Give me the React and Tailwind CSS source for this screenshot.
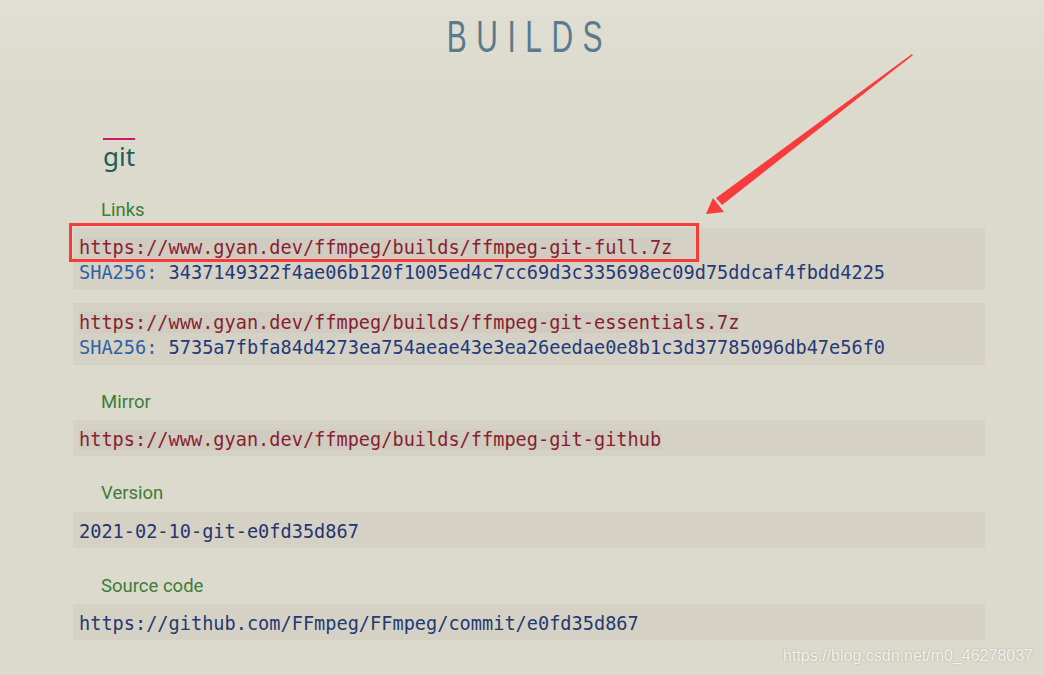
const mono = { fontFamily: '"DejaVu Sans Mono", "Liberation Mono", monospace' };

function Label({ children }) {
  return (
    <div className="h-[24px] pl-[28px] text-[18.5px] leading-[24px] text-[#3d7d37] font-['Roboto',sans-serif]">
      {children}
    </div>
  );
}

function Block({ children, single }) {
  return (
    <div
      className={
        "bg-[#d5d1c5] px-[6px] pt-[7px] text-[18.6px] leading-[25px] whitespace-pre " +
        (single ? "pb-[4px]" : "pb-[5px]")
      }
      style={mono}
    >
      {children}
    </div>
  );
}

function Link({ children }) {
  return <span className="bg-[#d0ccc1] text-[#8a1e2e]">{children}</span>;
}

function Sha({ value }) {
  return (
    <div>
      <span className="text-[#2d62a6]">SHA256:</span>
      <span className="text-[#243a7a]"> {value}</span>
    </div>
  );
}

export default function App() {
  return (
    <div className="relative min-h-screen bg-[#dcd9cd] overflow-hidden">
      {/* Header */}
      <div className="h-[80px] bg-gradient-to-b from-[#e1ded3] to-[#dddace] pt-[15px] flex justify-center">
        <h1 className="text-[44px] leading-[44px] tracking-[14px] text-[#5a7b8c] font-['Liberation_Sans',sans-serif] font-normal scale-x-[0.68] ml-[14px]">
          BUILDS
        </h1>
      </div>

      <div className="ml-[73px] w-[912px] pb-10">
        {/* Section title */}
        <div className="pl-[30px] pt-[58px]">
          <div className="w-[32px] h-[2px] bg-[#d0156c]" />
          <div className="text-[26px] leading-[30px] pt-[1px] text-[#1e5e55] font-['Noto_Sans',sans-serif]">
            git
          </div>
        </div>

        <div className="mt-[27px]">
          <Label>Links</Label>
          <div className="mt-[6px] flex flex-col gap-[13px]">
            <Block>
              <div><Link>https://www.gyan.dev/ffmpeg/builds/ffmpeg-git-full.7z</Link></div>
              <Sha value="3437149322f4ae06b120f1005ed4c7cc69d3c335698ec09d75ddcaf4fbdd4225" />
            </Block>
            <Block>
              <div><Link>https://www.gyan.dev/ffmpeg/builds/ffmpeg-git-essentials.7z</Link></div>
              <Sha value="5735a7fbfa84d4273ea754aeae43e3ea26eedae0e8b1c3d37785096db47e56f0" />
            </Block>
          </div>
        </div>

        <div className="mt-[25px]">
          <Label>Mirror</Label>
          <div className="mt-[6px]">
            <Block single>
              <Link>https://www.gyan.dev/ffmpeg/builds/ffmpeg-git-github</Link>
            </Block>
          </div>
        </div>

        <div className="mt-[25px]">
          <Label>Version</Label>
          <div className="mt-[7px]">
            <Block single>
              <span className="text-[#243670]">2021-02-10-git-e0fd35d867</span>
            </Block>
          </div>
        </div>

        <div className="mt-[26px]">
          <Label>Source code</Label>
          <div className="mt-[6px]">
            <Block single>
              <span className="text-[#243a72]">https://github.com/FFmpeg/FFmpeg/commit/e0fd35d867</span>
            </Block>
          </div>
        </div>
      </div>

      {/* Annotation box */}
      <div className="absolute left-[69px] top-[223px] w-[630px] h-[39px] border-[3px] border-[#f63b3b]" />

      {/* Annotation arrow */}
      <svg className="absolute left-0 top-0" width="1044" height="675" viewBox="0 0 1044 675">
        <polygon points="912,54 912.8,55.2 722,205 716,198" fill="#f83c3c" />
        <polygon points="706,214 713,198 724,212" fill="#f83c3c" />
      </svg>

      {/* Watermark */}
      <div className="absolute right-[11px] top-[645px] text-[16px] leading-[22px] text-[#f4f2ec] font-['Liberation_Sans',sans-serif] [text-shadow:0_0_2px_rgba(0,0,0,0.25)]">
        https://blog.csdn.net/m0_46278037
      </div>
    </div>
  );
}
